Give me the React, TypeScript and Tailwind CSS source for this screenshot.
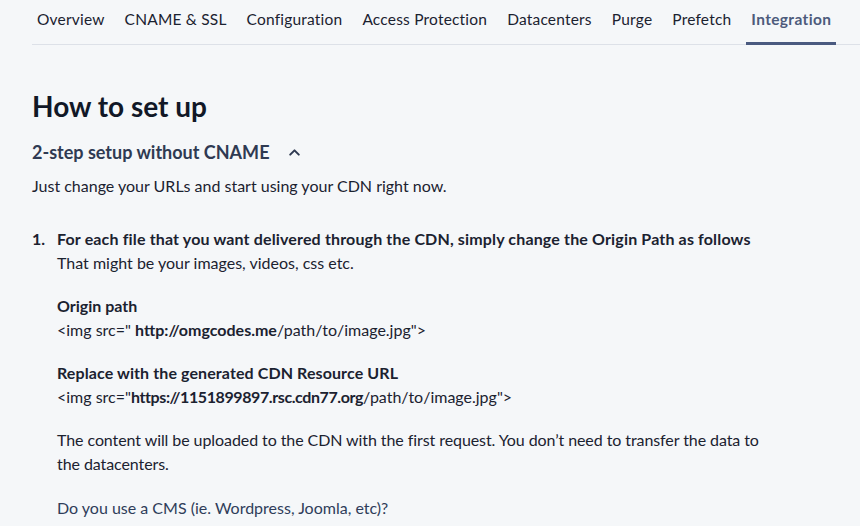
const tabs = ['Overview', 'CNAME & SSL', 'Configuration', 'Access Protection', 'Datacenters', 'Purge', 'Prefetch', 'Integration']

function ChevronUp() {
  return (
    <svg width="15" height="15" viewBox="0 0 14 14" fill="none" className="text-[#2f3a52]">
      <path d="M3 9l4-4 4 4" stroke="currentColor" strokeWidth="1.9" strokeLinecap="round" strokeLinejoin="round" />
    </svg>
  )
}

export default function App() {
  return (
    <div className="w-[860px] h-[526px] overflow-hidden bg-[#f5f7f9] text-[#1b2230] font-['Lato',sans-serif]">
      <div className="pl-8">
        <nav className="flex items-end gap-[10px] border-b border-[#dde1e8] h-[45px]">
          {tabs.map((t) => {
            const active = t === 'Integration'
            return (
              <div
                key={t}
                className={
                  active
                    ? 'px-[5px] pb-[11px] text-[15.5px] font-bold tracking-[0.35px] text-[#4d5b7c] border-b-[3px] border-[#4a5a80] -mb-px'
                    : 'px-[5px] pb-[13px] text-[15.5px] tracking-[0.2px] text-[#1b2230]'
                }
              >
                {t}
              </div>
            )
          })}
        </nav>

        <h1 className="mt-[44px] text-[28px] leading-[34px] font-bold text-[#111827]">How to set up</h1>

        <div className="mt-[16px] flex items-center gap-[18px]">
          <span className="text-[18px] font-bold text-[#2f3a52]">2-step setup without CNAME</span>
          <ChevronUp />
        </div>
        <p className="mt-[8px] text-[16px]">Just change your URLs and start using your CDN right now.</p>

        <div className="mt-[29px] flex text-[16px] leading-[24px]">
          <span className="w-[25px] font-bold">1.</span>
          <div className="flex-1">
            <p className="font-bold tracking-[0.15px]">
              For each file that you want delivered through the CDN, simply change the Origin Path as follows
            </p>
            <p>That might be your images, videos, css etc.</p>

            <p className="mt-[19px] font-bold">Origin path</p>
            <p>
              &lt;img src=" <b>http://omgcodes.me</b>/path/to/image.jpg"&gt;
            </p>

            <p className="mt-[19px] font-bold tracking-[0.1px]">Replace with the generated CDN Resource URL</p>
            <p>
              &lt;img src="<b className="tracking-[-0.4px]">https://1151899897.rsc.cdn77.org</b>/path/to/image.jpg"&gt;
            </p>

            <p className="mt-[19px] tracking-[-0.08px]">
              The content will be uploaded to the CDN with the first request. You don’t need to transfer the data to
              <br />
              the datacenters.
            </p>

            <p className="mt-[20px] text-[#2f3d5a]">Do you use a CMS (ie. Wordpress, Joomla, etc)?</p>
          </div>
        </div>
      </div>
    </div>
  )
}
